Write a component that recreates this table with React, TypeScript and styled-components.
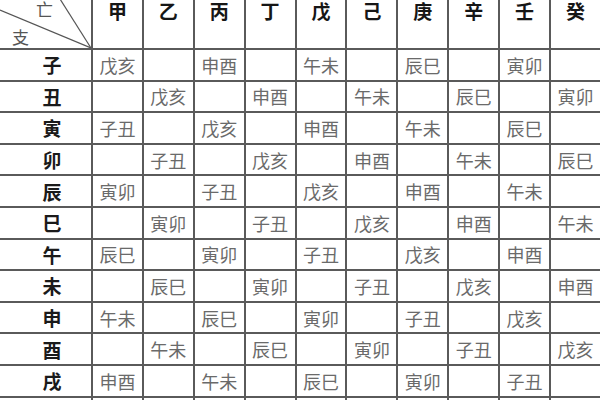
import styled, { createGlobalStyle } from 'styled-components';

const GlobalStyle = createGlobalStyle`
  html, body {
    margin: 0;
    padding: 0;
    background: #ffffff;
  }
  body {
    width: 600px;
    height: 400px;
    overflow: hidden;
  }
`;

const stems = ['甲', '乙', '丙', '丁', '戊', '己', '庚', '辛', '壬', '癸'];
const branches = ['子', '丑', '寅', '卯', '辰', '巳', '午', '未', '申', '酉', '戌', '亥'];
const pairs = ['戊亥', '申酉', '午未', '辰巳', '寅卯', '子丑'];

// each xun starts its void pair one step further down the list
function voidFor(row: number, col: number) {
  if ((row + col) % 2 !== 0) return '';
  const start = row - col;
  const idx = (((Math.floor(-start / 2) % 6) + 6) % 6);
  return pairs[idx];
}

const Table = styled.div`
  display: grid;
  grid-template-columns: 91px repeat(10, 48.9px);
  grid-template-rows: 48px repeat(12, 29.6px);
  gap: 2px;
  width: 600px;
  background: #5a5a5a;
  font-family: 'Noto Sans CJK SC', 'Noto Sans', sans-serif;
`;

const Cell = styled.div`
  background: #fff;
  display: flex;
  align-items: center;
  justify-content: center;
  font-size: 18px;
  color: #6a6a6a;
  letter-spacing: 0;
  line-height: 1;
`;

const HeadCell = styled(Cell)`
  align-items: flex-start;
  padding-top: 1px;
  font-size: 19px;
  font-weight: 700;
  color: #161616;
`;

const Label = styled(Cell)`
  padding-left: 13px;
  font-size: 19px;
  font-weight: 700;
  color: #1a1a1a;
`;

const Corner = styled.div`
  position: relative;
  background: #fff;
  overflow: hidden;
`;

const CornerText = styled.span<{ $x: number; $y: number }>`
  position: absolute;
  left: ${(p) => p.$x}px;
  top: ${(p) => p.$y}px;
  font-size: 17px;
  line-height: 1;
  color: #555;
`;

const Diagonals = styled.svg`
  position: absolute;
  inset: 0;
`;

export default function App() {
  return (
    <>
      <GlobalStyle />
      <Table>
        <Corner>
          <Diagonals width="91" height="48" viewBox="0 0 91 48">
            <line x1="0" y1="10" x2="91" y2="48" stroke="#555" strokeWidth="1.2" />
            <line x1="60" y1="-1" x2="91" y2="48" stroke="#555" strokeWidth="1.2" />
          </Diagonals>
          <CornerText $x={36} $y={0}>亡</CornerText>
          <CornerText $x={12} $y={28}>支</CornerText>
        </Corner>
        {stems.map((s) => (
          <HeadCell key={s}>{s}</HeadCell>
        ))}
        {branches.map((b, r) => (
          <>
            <Label key={b}>{b}</Label>
            {stems.map((s, c) => (
              <Cell key={b + s}>{voidFor(r, c)}</Cell>
            ))}
          </>
        ))}
      </Table>
    </>
  );
}
